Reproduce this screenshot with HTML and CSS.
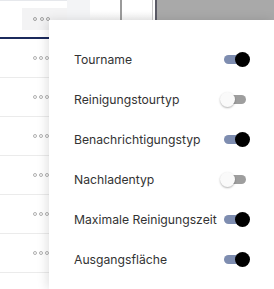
FILE: index.html
```html
<!DOCTYPE html>
<html lang="en">
<head>
<meta charset="UTF-8">
<meta name="viewport" content="width=device-width, initial-scale=1.0">
<title>Spalten</title>
<link rel="stylesheet" href="styles.css">
</head>
<body>

<div class="page">
    <div class="head">
        <div class="head-cell">
            <div class="dots-box"><span class="dot"></span><span class="dot"></span><span class="dot"></span></div>
        </div>
        <div class="head-fill"></div>
        <div class="head-pane pane-a"></div>
        <div class="head-pane pane-b"></div>
        <div class="head-dark"></div>
    </div>

    <div class="rows">
        <div class="row"><div class="row-dots"><span class="dot small"></span><span class="dot small"></span><span class="dot small"></span></div></div>
        <div class="row"><div class="row-dots"><span class="dot small"></span><span class="dot small"></span><span class="dot small"></span></div></div>
        <div class="row"><div class="row-dots"><span class="dot small"></span><span class="dot small"></span><span class="dot small"></span></div></div>
        <div class="row"><div class="row-dots"><span class="dot small"></span><span class="dot small"></span><span class="dot small"></span></div></div>
        <div class="row"><div class="row-dots"><span class="dot small"></span><span class="dot small"></span><span class="dot small"></span></div></div>
        <div class="row"><div class="row-dots"><span class="dot small"></span><span class="dot small"></span><span class="dot small"></span></div></div>
    </div>

    <!-- column chooser popup -->
    <div class="popup">
        <div class="option"><span>Tourname</span><span class="switch on"><span class="knob"></span></span></div>
        <div class="option"><span>Reinigungstourtyp</span><span class="switch"><span class="knob"></span></span></div>
        <div class="option"><span>Benachrichtigungstyp</span><span class="switch on"><span class="knob"></span></span></div>
        <div class="option"><span>Nachladentyp</span><span class="switch"><span class="knob"></span></span></div>
        <div class="option"><span>Maximale Reinigungszeit</span><span class="switch on"><span class="knob"></span></span></div>
        <div class="option"><span>Ausgangsfläche</span><span class="switch on"><span class="knob"></span></span></div>
    </div>
</div>

</body>
</html>
```

FILE: styles.css
```css
body {
    font-family: Inter, "Noto Sans", sans-serif;
    background-color: #ffffff;
    color: #333333;
    margin: 0;
    overflow: hidden;
}

.page {
    position: relative;
    height: 289px;
}

.head {
    display: flex;
    align-items: flex-start;
    height: 37px;
    border-bottom: 2px solid #1b2a5c;
}

.head-cell {
    width: 67px;
    height: 36px;
    border-top: 1px solid #e6e8ec;
}

.dots-box {
    margin: 7px 0 0 22px;
    height: 22px;
    background-color: #f3f3f4;
    display: flex;
    align-items: center;
    gap: 2.7px;
    padding-left: 11px;
}

.dot {
    width: 4px;
    height: 4px;
    border: 1px solid #a0a0a0;
    border-radius: 50%;
    box-sizing: border-box;
}

.dot.small {
    width: 4px;
    height: 4px;
    border-color: #b0b0b0;
}

.head-fill {
    width: 23px;
    height: 20px;
    background-color: #f3f4f6;
}

.head-pane {
    height: 20px;
    background: linear-gradient(#ffffff 55%, #f3f3f3);
    border-right: 2px solid #9a9a9a;
}

.pane-a {
    width: 30px;
}

.pane-b {
    width: 30px;
    border-right: 1px solid #c8c8c8;
    margin-right: 2px;
}

.head-dark {
    flex: 1;
    height: 20px;
    background-color: #a9a9a9;
    border-left: 2px solid #5a5a66;
}

.row {
    height: 38px;
    border-bottom: 1px solid #ebebeb;
    display: flex;
    align-items: center;
}

.row-dots {
    display: flex;
    gap: 2px;
    margin-left: 33px;
}

.popup {
    position: absolute;
    left: 49px;
    top: 20px;
    right: 0;
    bottom: 0;
    background-color: #ffffff;
    box-shadow: -2px 0 10px rgba(0, 0, 0, 0.12);
    padding-top: 19px;
}

.option {
    height: 40px;
    display: flex;
    align-items: center;
    justify-content: space-between;
    padding: 0 28px 0 25px;
    font-size: 12.2px;
    color: #333333;
}

.switch {
    position: relative;
    width: 22px;
    height: 9px;
    border-radius: 5px;
    background-color: #9e9e9e;
}

.switch .knob {
    position: absolute;
    top: -3px;
    left: -4px;
    width: 15px;
    height: 15px;
    border-radius: 50%;
    background-color: #fafafa;
    box-shadow: 0 1px 2px rgba(0, 0, 0, 0.3);
}

.switch.on {
    background-color: #7e8db0;
}

.switch.on .knob {
    left: 11px;
    background-color: #000000;
    box-shadow: none;
}
```
